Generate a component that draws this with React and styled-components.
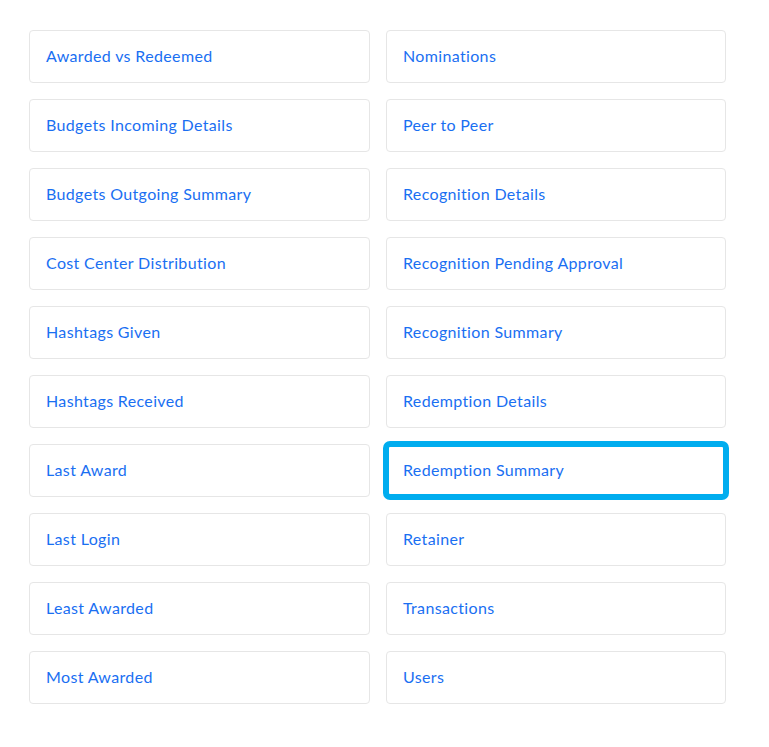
import React from "react"
import styled, {createGlobalStyle} from "styled-components"

const reports = [
    ["Awarded vs Redeemed", "Nominations"],
    ["Budgets Incoming Details", "Peer to Peer"],
    ["Budgets Outgoing Summary", "Recognition Details"],
    ["Cost Center Distribution", "Recognition Pending Approval"],
    ["Hashtags Given", "Recognition Summary"],
    ["Hashtags Received", "Redemption Details"],
    ["Last Award", "Redemption Summary"],
    ["Last Login", "Retainer"],
    ["Least Awarded", "Transactions"],
    ["Most Awarded", "Users"],
]

const selected = "Redemption Summary"

export default function App() {
    return <>
        <GlobalStyle/>
        <ReportGrid>
            {reports.flat().map(name =>
                <ReportCard key={name} $active={name === selected}>
                    <ReportLink>{name}</ReportLink>
                </ReportCard>
            )}
        </ReportGrid>
    </>
}

const GlobalStyle = createGlobalStyle`
    body {
        margin: 0;
        background: #ffffff;
        font-family: Lato, "Open Sans", sans-serif;
    }
`

const ReportGrid = styled.div`
    display: grid;
    grid-template-columns: 341px 340px;
    column-gap: 16px;
    row-gap: 16px;
    padding: 30px 0 0 29px;
`

const ReportCard = styled.div`
    box-sizing: border-box;
    height: 53px;
    display: flex;
    align-items: center;
    padding: 0 16px 2px;
    background: #ffffff;
    border: 1px solid #e6e6e6;
    border-radius: 4px;
    ${p => p.$active && `
        border: 3px solid #00adef;
        padding: 0 14px 2px;
        box-shadow: 0 0 0 3px #00adef;
        border-radius: 4px;
    `}
`

const ReportLink = styled.span`
    color: #1a6ff2;
    font-size: 16px;
    letter-spacing: 0.35px;
`
